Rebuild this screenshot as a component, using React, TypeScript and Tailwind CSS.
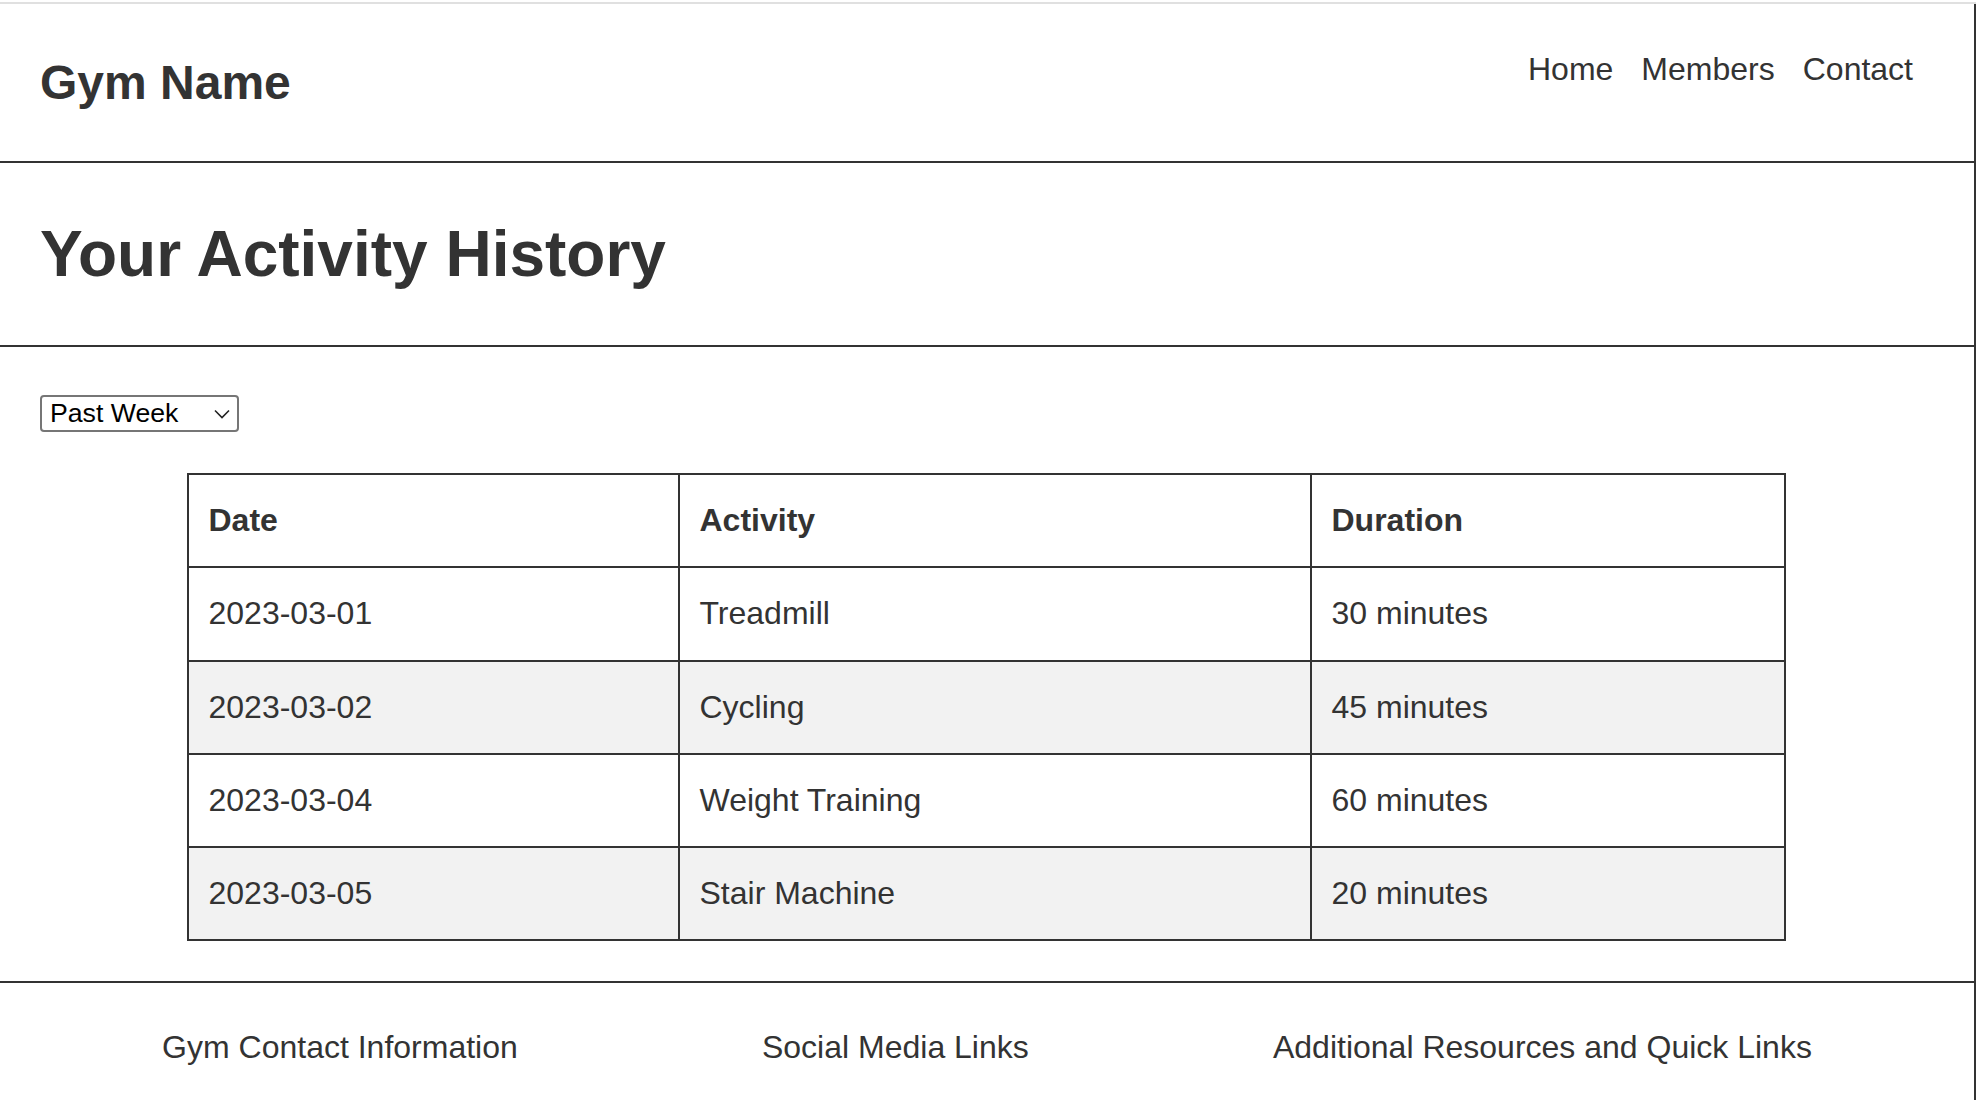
import React, { useState } from 'react';

type ActivityRow = {
  date: string;
  activity: string;
  duration: string;
};

const ROWS: ActivityRow[] = [
  { date: '2023-03-01', activity: 'Treadmill', duration: '30 minutes' },
  { date: '2023-03-02', activity: 'Cycling', duration: '45 minutes' },
  { date: '2023-03-04', activity: 'Weight Training', duration: '60 minutes' },
  { date: '2023-03-05', activity: 'Stair Machine', duration: '20 minutes' },
];

const NAV_LINKS = ['Home', 'Members', 'Contact'];

const FOOTER_ITEMS = ['Gym Contact Information', 'Social Media Links', 'Additional Resources and Quick Links'];

export default function App() {
  const [range, setRange] = useState('week');

  return (
    <div className="h-[1100px] overflow-hidden bg-white font-['Liberation_Sans',Arial,sans-serif] text-[#333]">
      <div className="mt-[2px] h-[2px] bg-[#e0e0e0]" />

      <div className="flex h-[1096px] flex-col border-r-2 border-[#333]">
        {/* header */}
        <header className="flex h-[159px] shrink-0 items-start justify-between border-b-2 border-[#333] px-[40px]">
          <h2 className="mt-[51px] text-[48px] font-bold leading-[55px]">Gym Name</h2>
          <nav className="mt-[47px] mr-[21px]">
            <ul className="flex gap-[28px] text-[32px] leading-[37px]">
              {NAV_LINKS.map((link) => (
                <li key={link}>
                  <a href="#">{link}</a>
                </li>
              ))}
            </ul>
          </nav>
        </header>

        {/* title */}
        <section className="h-[184px] shrink-0 border-b-2 border-[#333] px-[40px]">
          <h1 className="mt-[55px] text-[64px] font-bold leading-[73px]">Your Activity History</h1>
        </section>

        {/* history */}
        <main className="h-[636px] shrink-0 border-b-2 border-[#333] px-[40px] pt-[48px]">
          <div className="relative w-[199px]">
            <select
              value={range}
              onChange={(event) => setRange(event.target.value)}
              className="h-[37px] w-full appearance-none rounded-[4px] border-2 border-[#767676] bg-white pl-[8px] text-[26.67px] leading-[33px] text-black outline-none"
            >
              <option value="week">Past Week</option>
              <option value="month">Past Month</option>
              <option value="year">Past Year</option>
            </select>
            <svg
              className="pointer-events-none absolute right-[9px] top-[14px] h-[10px] w-[16px]"
              viewBox="0 0 16 10"
              fill="none"
              stroke="#222"
              strokeWidth="1.6"
            >
              <path d="M1 1.5 L8 8.5 L15 1.5" />
            </svg>
          </div>

          <table className="mx-auto mt-[41px] w-[1599px] -translate-x-px table-fixed border-separate border-spacing-0 border-l-2 border-t-2 border-[#333] text-left text-[32px] leading-[37px]">
            <thead>
              <tr>
                <th className="h-[93.3px] w-[491px] border-b-2 border-r-2 border-[#333] px-[20px] font-bold">Date</th>
                <th className="h-[93.3px] w-[632px] border-b-2 border-r-2 border-[#333] px-[20px] font-bold">Activity</th>
                <th className="h-[93.3px] w-[474px] border-b-2 border-r-2 border-[#333] px-[20px] font-bold">Duration</th>
              </tr>
            </thead>
            <tbody>
              {ROWS.map((row, index) => (
                <tr key={row.date} className={index % 2 === 1 ? 'bg-[#f2f2f2]' : 'bg-white'}>
                  <td className="h-[93.3px] border-b-2 border-r-2 border-[#333] px-[20px]">{row.date}</td>
                  <td className="h-[93.3px] border-b-2 border-r-2 border-[#333] px-[20px]">{row.activity}</td>
                  <td className="h-[93.3px] border-b-2 border-r-2 border-[#333] px-[20px]">{row.duration}</td>
                </tr>
              ))}
            </tbody>
          </table>
        </main>

        {/* footer */}
        <footer className="flex flex-1 items-start justify-around px-[40px] pt-[46px] text-[32px] leading-[37px]">
          {FOOTER_ITEMS.map((item) => (
            <p key={item}>{item}</p>
          ))}
        </footer>
      </div>
    </div>
  );
}
